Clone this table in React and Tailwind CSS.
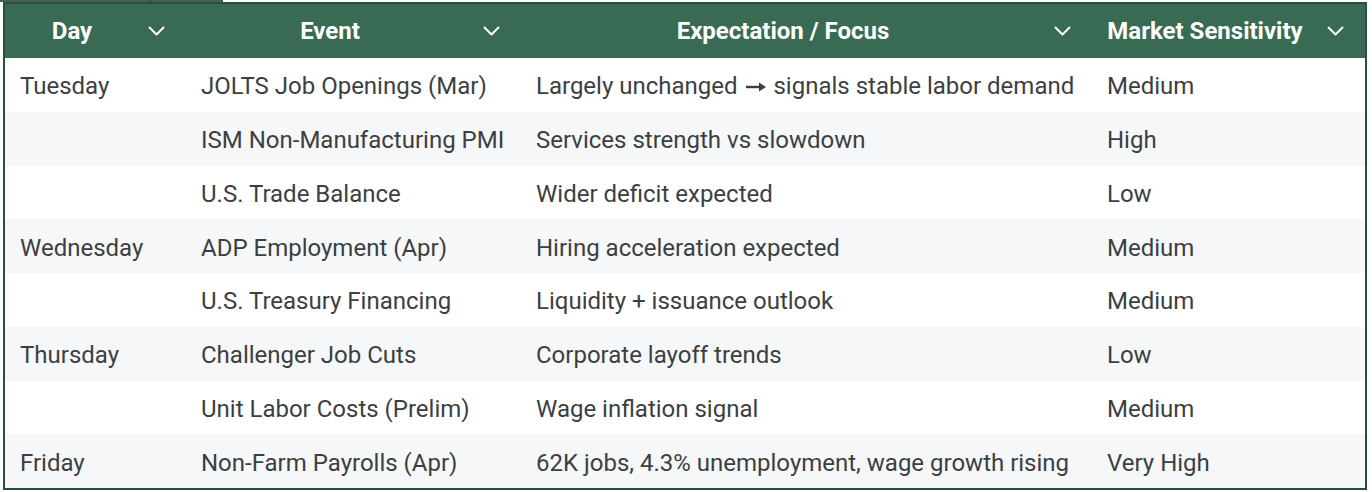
import React from "react";

const rows = [
  ["Tuesday", "JOLTS Job Openings (Mar)", "arrow", "Medium"],
  ["", "ISM Non-Manufacturing PMI", "Services strength vs slowdown", "High"],
  ["", "U.S. Trade Balance", "Wider deficit expected", "Low"],
  ["Wednesday", "ADP Employment (Apr)", "Hiring acceleration expected", "Medium"],
  ["", "U.S. Treasury Financing", "Liquidity + issuance outlook", "Medium"],
  ["Thursday", "Challenger Job Cuts", "Corporate layoff trends", "Low"],
  ["", "Unit Labor Costs (Prelim)", "Wage inflation signal", "Medium"],
  ["Friday", "Non-Farm Payrolls (Apr)", "62K jobs, 4.3% unemployment, wage growth rising", "Very High"],
];

const headers = ["Day", "Event", "Expectation / Focus", "Market Sensitivity"];

function Chevron() {
  return (
    <svg width="17" height="10" viewBox="0 0 17 10" className="shrink-0">
      <polyline points="1.5,1.5 8.5,8.5 15.5,1.5" fill="none" stroke="white" strokeWidth="2" strokeLinecap="round" strokeLinejoin="round" />
    </svg>
  );
}

export default function App() {
  return (
    <div className="w-[1372px] h-[492px] bg-white overflow-hidden" style={{ fontFamily: "Roboto, 'Liberation Sans', sans-serif" }}>
      <div className="flex h-[2px]">
        <div className="w-[150px] bg-[#4b5e55]" />
        <div className="w-[1px] bg-[#2f3d36]" />
        <div className="w-[72px] bg-[#4b5e55]" />
      </div>
      <div className="ml-[3px] w-[1364px] border-2 border-[#26503f]">
        <div className="grid grid-cols-[181px_335px_571px_273px] h-[54px] bg-[#386a54] text-white font-bold text-[24px]">
          {headers.map((h) => (
            <div key={h} className="flex items-center gap-[9px] pr-[21px]">
              <span className="flex-1 text-center whitespace-nowrap">{h}</span>
              <Chevron />
            </div>
          ))}
        </div>
        {rows.map((r, i) => (
          <div
            key={i}
            className={`grid grid-cols-[181px_335px_571px_273px] h-[53.75px] items-center text-[24px] text-[#3c3f42] ${i % 2 === 1 ? "bg-[#f6f7f9]" : "bg-white"}`}
          >
            {r.map((c, j) => (
              <div key={j} className="pl-[15px] pt-[3px] whitespace-nowrap">
                {c === "arrow" ? (
                  <>
                    Largely unchanged{" "}
                    <svg width="24" height="12" viewBox="0 0 24 12" className="inline-block align-middle mb-[3px]">
                      <line x1="2" y1="6" x2="20" y2="6" stroke="#3c3f42" strokeWidth="2.4" />
                      <polygon points="22,6 15,1.5 15,10.5" fill="#3c3f42" />
                    </svg>{" "}
                    signals stable labor demand
                  </>
                ) : (
                  c
                )}
              </div>
            ))}
          </div>
        ))}
      </div>
    </div>
  );
}
